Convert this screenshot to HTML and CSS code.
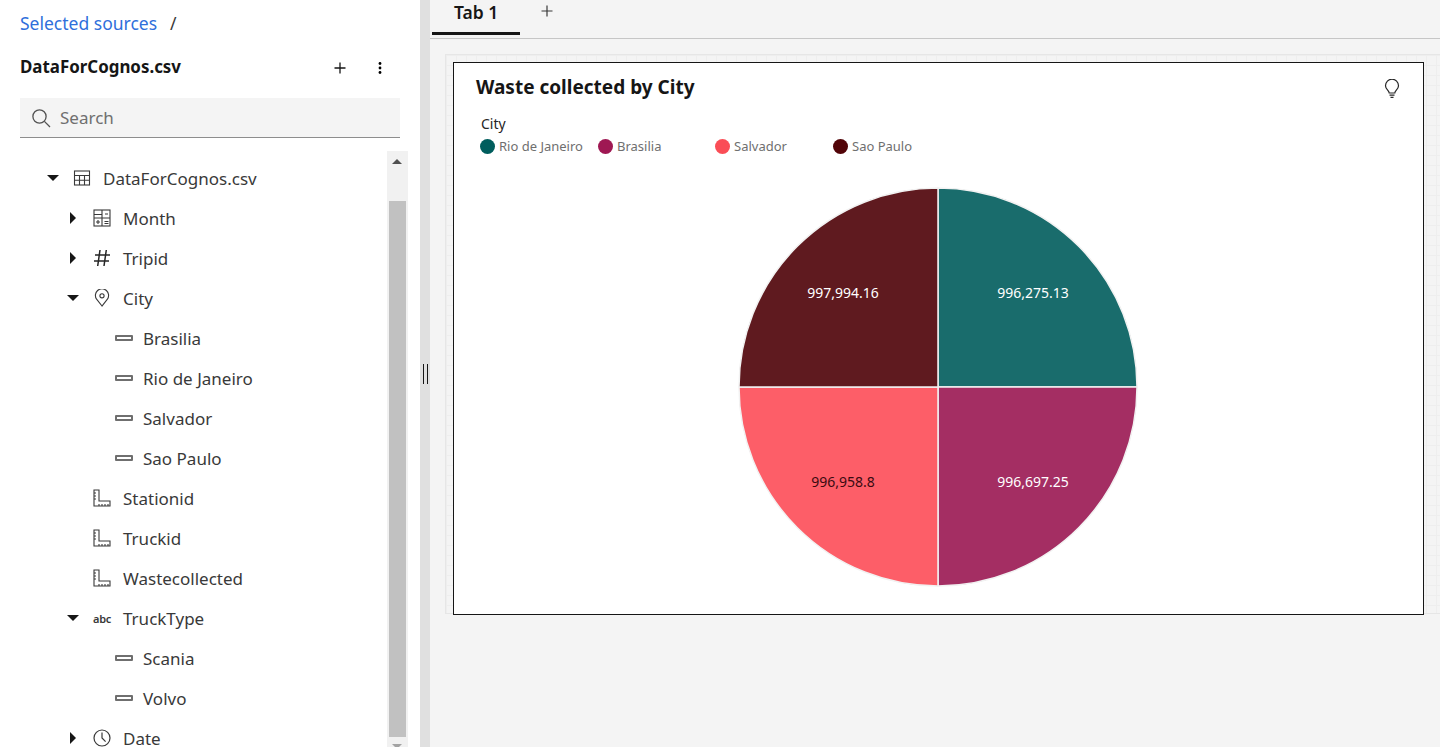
FILE: index.html
```html
<!DOCTYPE html>
<html lang="en">
<head>
  <meta charset="UTF-8">
  <title>Waste collected by City</title>
  <link rel="stylesheet" href="styles.css">
</head>
<body>

  <aside class="sidebar">
    <div class="crumbs"><a class="crumb-link">Selected sources</a><span class="crumb-sep">/</span></div>

    <div class="source-head">
      <span class="source-name">DataForCognos.csv</span>
      <svg class="head-icon add" width="16" height="16" viewBox="0 0 16 16"><path d="M8 2.5v11M2.5 8h11" stroke="#161616" stroke-width="1.3"/></svg>
      <svg class="head-icon more" width="16" height="16" viewBox="0 0 16 16"><circle cx="8" cy="3.5" r="1.4"/><circle cx="8" cy="8" r="1.4"/><circle cx="8" cy="12.5" r="1.4"/></svg>
    </div>

    <div class="search">
      <svg width="20" height="20" viewBox="0 0 20 20" fill="none" stroke="#525252" stroke-width="1.3"><circle cx="8.5" cy="8.5" r="6.6"/><path d="M13.4 13.4l5.6 5.6"/></svg>
      <span class="search-text">Search</span>
    </div>

    <div class="tree-wrap">
      <ul class="tree">
        <li class="row lvl1">
          <span class="caret down"></span>
          <svg class="ico" viewBox="0 0 18 18" fill="none" stroke="#393939" stroke-width="1.1"><rect x="1.5" y="2" width="15" height="14"/><path d="M1.5 6.5h15M1.5 11.2h15M6.500 6.5V16M11.5 6.5V16"/></svg>
          <span>DataForCognos.csv</span>
        </li>
        <li class="row lvl2">
          <span class="caret right"></span>
          <svg class="ico" viewBox="0 0 18 18" fill="none" stroke="#393939" stroke-width="1.1"><rect x="1" y="1" width="16" height="16"/><path d="M9 1v16M1 5.5h8M1 9h16M12 5h3M11.5 12.5h4M11.5 14.5h4M3 13h4M5 11v4"/></svg>
          <span>Month</span>
        </li>
        <li class="row lvl2">
          <span class="caret right"></span>
          <svg class="ico" viewBox="0 0 18 18" fill="none" stroke="#262626" stroke-width="1.5"><path d="M7 1L4.7 17M13.3 1L11 17M2 6h15M1 12h15"/></svg>
          <span>Tripid</span>
        </li>
        <li class="row lvl2">
          <span class="caret down"></span>
          <svg class="ico" viewBox="0 0 18 18" fill="none" stroke="#393939" stroke-width="1.1"><path d="M9 17L3.6 10.2A6.6 6.6 0 1 1 14.4 10.2Z"/><circle cx="9" cy="6.8" r="2.1"/></svg>
          <span>City</span>
        </li>
        <li class="row lvl3"><span class="member"></span><span>Brasilia</span></li>
        <li class="row lvl3"><span class="member"></span><span>Rio de Janeiro</span></li>
        <li class="row lvl3"><span class="member"></span><span>Salvador</span></li>
        <li class="row lvl3"><span class="member"></span><span>Sao Paulo</span></li>
        <li class="row lvl2 no-caret">
          <svg class="ico" viewBox="0 0 18 18" fill="none" stroke="#393939" stroke-width="1.1"><path d="M1 1h5v11h11v5H1zM1 4h2M1 7h2M1 10h2M6 17v-2M9 17v-2M12 17v-2M15 17v-2"/></svg>
          <span>Stationid</span>
        </li>
        <li class="row lvl2 no-caret">
          <svg class="ico" viewBox="0 0 18 18" fill="none" stroke="#393939" stroke-width="1.1"><path d="M1 1h5v11h11v5H1zM1 4h2M1 7h2M1 10h2M6 17v-2M9 17v-2M12 17v-2M15 17v-2"/></svg>
          <span>Truckid</span>
        </li>
        <li class="row lvl2 no-caret">
          <svg class="ico" viewBox="0 0 18 18" fill="none" stroke="#393939" stroke-width="1.1"><path d="M1 1h5v11h11v5H1zM1 4h2M1 7h2M1 10h2M6 17v-2M9 17v-2M12 17v-2M15 17v-2"/></svg>
          <span>Wastecollected</span>
        </li>
        <li class="row lvl2">
          <span class="caret down"></span>
          <span class="ico abc">abc</span>
          <span>TruckType</span>
        </li>
        <li class="row lvl3"><span class="member"></span><span>Scania</span></li>
        <li class="row lvl3"><span class="member"></span><span>Volvo</span></li>
        <li class="row lvl2">
          <span class="caret right"></span>
          <svg class="ico" viewBox="0 0 18 18" fill="none" stroke="#393939" stroke-width="1.2"><circle cx="9" cy="9" r="8"/><path d="M9 3.5V9l3.6 3.6"/></svg>
          <span>Date</span>
        </li>
      </ul>
      <div class="scrollbar">
        <span class="arrow up"></span>
        <div class="track"><div class="thumb"></div></div>
        <span class="arrow dn"></span>
      </div>
    </div>
  </aside>

  <div class="splitter"><span class="grip"></span></div>

  <main class="main">
    <div class="tabs">
      <div class="tab">Tab 1</div>
      <svg class="tab-add" width="12" height="12" viewBox="0 0 12 12"><path d="M6 .5v11M.5 6h11" stroke="#393939" stroke-width="1.2"/></svg>
    </div>

    <div class="canvas">
      <section class="card">
        <div class="card-head">
          <h1>Waste collected by City</h1>
          <svg class="bulb" width="16" height="20" viewBox="0 0 16 20" fill="none" stroke="#262626" stroke-width="1.2"><path d="M5.2 14c0-2.300-3.700-3.700-3.700-7.300a6.500 6.500 0 0 1 13 0c0 3.600-3.700 5-3.700 7.300z"/><path d="M5.500 16.200h5M6.500 18.300h3"/></svg>
        </div>

        <div class="legend">
          <div class="legend-title">City</div>
          <div class="legend-items">
            <span class="legend-item w1"><i class="dot teal"></i>Rio de Janeiro</span>
            <span class="legend-item w2"><i class="dot plum"></i>Brasilia</span>
            <span class="legend-item w3"><i class="dot coral"></i>Salvador</span>
            <span class="legend-item"><i class="dot maroon"></i>Sao Paulo</span>
          </div>
        </div>

        <svg class="pie" width="400" height="400" viewBox="0 0 400 400">
          <g stroke="#f2f2f2" stroke-width="1.500">
            <path d="M200 200V1A199 199 0 0 1 399 200Z" fill="#196c6c"/>
            <path d="M200 200H399A199 199 0 0 1 200 399Z" fill="#a42e63"/>
            <path d="M200 200V399A199 199 0 0 1 1 200Z" fill="#fd5e68"/>
            <path d="M200 200H1A199 199 0 0 1 200 1Z" fill="#5f1a1f"/>
          </g>
          <g class="pie-label">
            <text x="295" y="111" fill="#fff">996,275.13</text>
            <text x="295" y="300" fill="#fff">996,697.25</text>
            <text x="105" y="300" fill="#3a0a10">996,958.8</text>
            <text x="105" y="111" fill="#fff">997,994.16</text>
          </g>
        </svg>
      </section>
    </div>
  </main>

</body>
</html>
```

FILE: styles.css
```css
* {
  box-sizing: border-box;
}
html, body {
  margin: 0;
  height: 747px;
  overflow: hidden;
}
body {
  display: flex;
  font-family: "Noto Sans", "Open Sans", Arial, sans-serif;
  color: #161616;
  background: #fff;
}

/* left panel */
.sidebar {
  width: 420px;
  height: 747px;
  padding: 0 20px;
  background: #fff;
  overflow: hidden;
}
.crumbs {
  display: flex;
  align-items: center;
  height: 44px;
  padding-top: 2px;
  font-size: 17.5px;
}
.crumb-link {
  color: #2f6fdb;
}
.crumb-sep {
  margin-left: 13px;
  color: #393939;
}
.source-head {
  display: flex;
  align-items: center;
  height: 44px;
}
.source-name {
  flex: 1;
  font-size: 16.9px;
  font-weight: 700;
}
.head-icon {
  margin-top: 4px;
}
.head-icon.add {
  margin-right: 24px;
}
.head-icon.more {
  margin-right: 12px;
}
.search {
  display: flex;
  align-items: center;
  height: 40px;
  margin-top: 10px;
  padding-left: 11px;
  background: #f4f4f4;
  border-bottom: 1px solid #8d8d8d;
}
.search-text {
  margin-left: 9px;
  font-size: 17px;
  color: #6f6f6f;
}

.tree-wrap {
  display: flex;
  margin-top: 13px;
  height: 596px;
}
.tree {
  flex: 0 0 367px;
  margin: 0;
  padding: 7px 0 0;
  list-style: none;
}
.row {
  display: flex;
  align-items: center;
  height: 40px;
  font-size: 17px;
  color: #393939;
}
.lvl1 { padding-left: 27px; }
.lvl2 { padding-left: 47px; }
.lvl3 { padding-left: 95px; }
.no-caret { padding-left: 73px; }

.caret {
  width: 12px;
  height: 12px;
  margin-right: 14px;
  flex: none;
  position: relative;
}
.caret.down::before {
  content: "";
  position: absolute;
  left: 0;
  top: 3px;
  border-left: 6px solid transparent;
  border-right: 6px solid transparent;
  border-top: 6px solid #161616;
}
.caret.right::before {
  content: "";
  position: absolute;
  left: 3px;
  top: 0;
  border-top: 6px solid transparent;
  border-bottom: 6px solid transparent;
  border-left: 6px solid #161616;
}
.ico {
  width: 18px;
  height: 18px;
  margin-right: 12px;
  flex: none;
}
.abc {
  display: flex;
  align-items: center;
  font-size: 11px;
  font-weight: 600;
  letter-spacing: -0.3px;
  color: #393939;
}
.member {
  width: 18px;
  height: 6px;
  margin-right: 10px;
  flex: none;
  border: 2px solid #6f6f6f;
  border-radius: 1px;
}

.scrollbar {
  display: flex;
  flex: none;
  flex-direction: column;
  width: 21px;
  background: #f1f1f1;
}
.arrow {
  position: relative;
  flex: none;
  height: 17px;
}
.arrow::before {
  content: "";
  position: absolute;
  left: 5px;
  border-left: 5px solid transparent;
  border-right: 5px solid transparent;
}
.arrow.up::before {
  top: 8px;
  border-bottom: 5px solid #505050;
}
.arrow.dn {
  height: 10px;
}
.arrow.dn::before {
  top: 7px;
  border-top: 5px solid #a3a3a3;
}
.track {
  flex: 1;
  padding: 33px 2px 0;
}
.thumb {
  height: 100%;
  background: #c1c1c1;
}

/* drag handle */
.splitter {
  display: flex;
  align-items: center;
  justify-content: center;
  width: 10px;
  height: 747px;
  background: #e0e0e0;
}
.grip {
  width: 5px;
  height: 20px;
  border-left: 1px solid #161616;
  border-right: 1px solid #161616;
}

/* right side */
.main {
  flex: 1;
  height: 747px;
  background: #f4f4f4;
}
.tabs {
  display: flex;
  height: 39px;
  padding-left: 2px;
  border-bottom: 1px solid #c6c6c6;
}
.tab {
  width: 88px;
  height: 35px;
  padding: 0 0 0 22px;
  font-size: 17.5px;
  font-weight: 600;
  border-bottom: 3px solid #161616;
}
.tab-add {
  margin: 5px 0 0 21px;
}
.canvas {
  height: 560px;
  margin: 15px 0 0 15px;
  padding: 7px 16px 0 7px;
  border-top: 1px solid #e6e6e6;
  border-left: 1px solid #e6e6e6;
  border-bottom: 1px solid #e6e6e6;
  background-image:
    linear-gradient(#eeeeee 1px, transparent 1px),
    linear-gradient(90deg, #eeeeee 1px, transparent 1px);
  background-size: 10px 10px;
}
.card {
  position: relative;
  height: 553px;
  background: #fff;
  border: 1px solid #161616;
}
.card-head {
  display: flex;
  justify-content: space-between;
  padding: 10px 23px 0 22px;
}
.card-head h1 {
  margin: 0;
  font-size: 19px;
  font-weight: 700;
  line-height: 28px;
}
.bulb {
  margin-top: 6px;
}
.legend {
  margin: 13px 0 0 26px;
}
.legend-title {
  padding-left: 1px;
  font-size: 14px;
  line-height: 20px;
  color: #262626;
}
.legend-items {
  display: flex;
  margin-top: 3px;
}
.legend-item {
  display: flex;
  align-items: center;
  font-size: 13px;
  line-height: 18px;
  color: #6f6f6f;
}
.legend-item.w1 { width: 118px; }
.legend-item.w2 { width: 117px; }
.legend-item.w3 { width: 118px; }
.dot {
  width: 15px;
  height: 15px;
  margin-right: 4px;
  border-radius: 50%;
}
.dot.teal { background: #005d5d; }
.dot.plum { background: #9f1853; }
.dot.coral { background: #fa4d56; }
.dot.maroon { background: #520408; }

/* sits on the card at its own spot */
.pie {
  position: absolute;
  left: 284px;
  top: 124px;
}
.pie-label text {
  font-family: "Noto Sans", Arial, sans-serif;
  font-size: 14px;
  text-anchor: middle;
}
```
